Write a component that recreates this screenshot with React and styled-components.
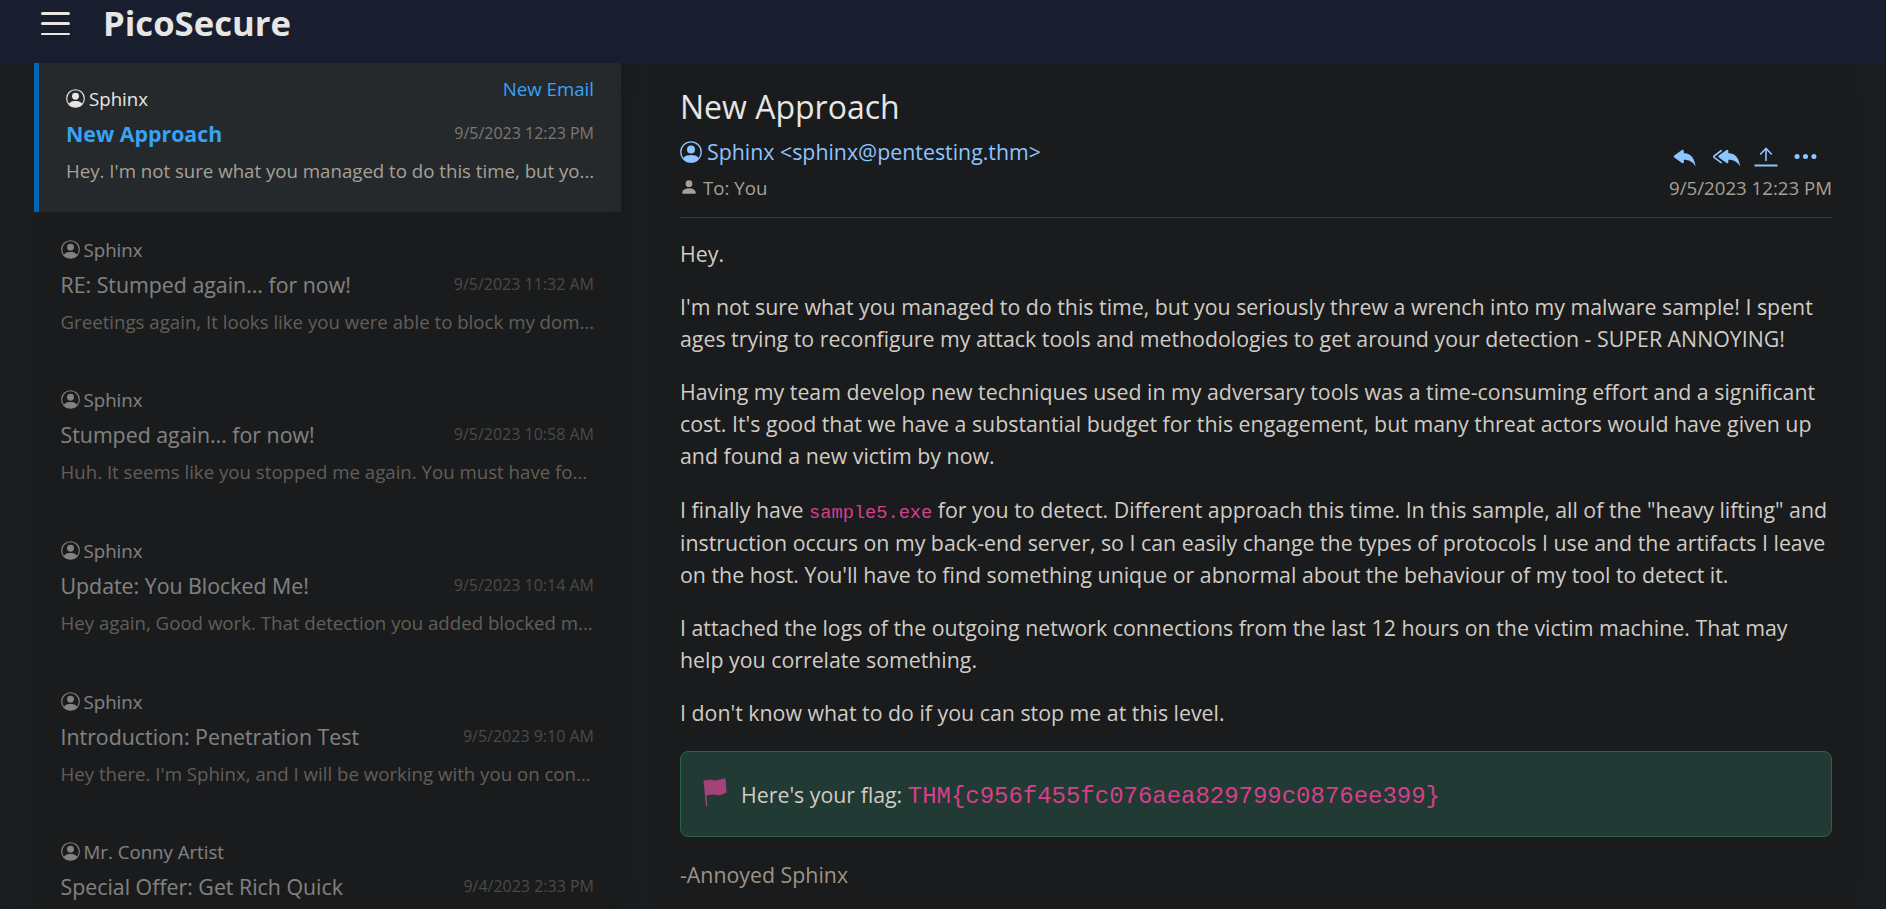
import React from 'react';
import styled, { createGlobalStyle, css } from 'styled-components';
import { BsReplyFill, BsReplyAllFill, BsThreeDots, BsPersonFill } from 'react-icons/bs';

const Global = createGlobalStyle`
  * { box-sizing: border-box; }
  html, body { margin: 0; height: 909px; overflow: hidden; }
  body {
    background: #1b1e20;
    color: #e8e6e3;
    font-family: "Open Sans", "Noto Sans", sans-serif;
    font-size: 21.33px;
  }
  p { margin: 0; }
`;

const Page = styled.div`
  display: flex;
  flex-direction: column;
  height: 909px;
  overflow: hidden;
`;

const Header = styled.header`
  display: flex;
  align-items: flex-start;
  flex: none;
  height: 63px;
  padding: 0 0 0 41px;
  background: #181e2e;
`;

const MenuButton = styled.div`
  display: flex;
  flex-direction: column;
  gap: 7.8px;
  width: 29px;
  margin: 12px 33px 0 0;
`;

const MenuLine = styled.span`
  height: 2.6px;
  border-radius: 2px;
  background: #e8e6e3;
`;

const Brand = styled.div`
  font-size: 34.67px;
  font-weight: 700;
  line-height: 45px;
`;

const Main = styled.main`
  display: flex;
  flex: none;
  gap: 32px;
  padding: 0 26px 0 34px;
  height: 846px;
  overflow: hidden;
`;

const panel = css`
  background: #1a1b1c;
  box-shadow: 0 0 30px #181f22;
`;

const MailList = styled.section`
  ${panel}
  width: 587px;
  flex: none;
`;

const MailItem = styled.article`
  display: flex;
  flex-direction: column;
  height: ${(p) => (p.$active ? '148.8px' : '150.6px')};
  padding: ${(p) => (p.$active ? '17px 27px 0 27px' : '19px 27px 0 26.5px')};
  border-left: ${(p) => (p.$active ? '5px solid #0065b5' : '0')};
  background: ${(p) => (p.$active ? '#25292c' : 'transparent')};
  opacity: ${(p) => (p.$active ? 1 : 0.5)};
`;

const ItemTop = styled.div`
  display: flex;
  justify-content: space-between;
  height: 37px;
`;

const Sender = styled.div`
  display: flex;
  align-items: center;
  gap: 4px;
  font-size: 18.67px;
`;

const NewLabel = styled.span`
  color: #37a3f5;
  font-size: 18.67px;
  line-height: 17px;
`;

const SubjectRow = styled.div`
  display: flex;
  justify-content: space-between;
  line-height: 33px;
`;

const Subject = styled.span`
  font-weight: ${(p) => (p.$active ? 700 : 400)};
  color: ${(p) => (p.$active ? '#37a3f5' : '#e8e6e3')};
`;

const ItemDate = styled.span`
  font-size: 16px;
  line-height: 32px;
  color: #7d7972;
`;

const Preview = styled.p`
  margin-top: 4px;
  font-size: 18.67px;
  line-height: 34px;
  color: #a8a095;
  white-space: nowrap;
`;

const Reader = styled.section`
  ${panel}
  flex: 1;
  min-width: 0;
  padding: 23px 28px 0 27px;
`;

const Title = styled.h1`
  margin: 0;
  font-size: 32px;
  font-weight: 400;
  line-height: 42px;
`;

const MetaRow = styled.div`
  display: flex;
  justify-content: space-between;
  height: ${(p) => p.$h}px;
`;

const From = styled.div`
  display: flex;
  align-items: center;
  gap: 5px;
  color: #8cc5ff;
`;

const To = styled.div`
  display: flex;
  align-items: center;
  gap: 5px;
  color: #a8a095;
  font-size: 18.67px;
`;

const Actions = styled.div`
  display: flex;
  align-items: center;
  gap: 14px;
  padding: 10px 13px 0 0;
  color: #8cc5ff;
`;

const Divider = styled.hr`
  margin: 18px 0 20px;
  border: 0;
  border-top: 1px solid #3a3d3f;
`;

const Paragraph = styled.p`
  margin-bottom: 21.2px;
  line-height: 32px;
  color: #d0ccc6;
  white-space: nowrap;
`;

const Code = styled.code`
  font-family: "Liberation Mono", monospace;
  font-size: ${(p) => p.$size}px;
  line-height: 28px;
  color: #d63f8c;
`;

const FlagBox = styled.div`
  display: flex;
  align-items: center;
  height: 86px;
  margin-top: 22px;
  padding: 0 22px;
  border: 1px solid #2f6149;
  border-radius: 8px;
  background: #213a33;
  color: #d0ccc6;
`;

const FlagText = styled.span`
  margin-left: 14px;
  padding-top: 3px;
  line-height: 30px;
  white-space: pre;
`;

const Signature = styled.p`
  margin-top: 22px;
  line-height: 32px;
  color: #9d9488;
`;

const UserIcon = ({ size }) => (
  <svg width={size} height={size} viewBox="0 0 22 22" fill="currentColor">
    <circle cx="11" cy="11" r="10.2" fill="none" stroke="currentColor" strokeWidth="1.3" />
    <circle cx="11" cy="8.4" r="4" />
    <path d="M3.2 17.2C5 14.6 8 14 11 14s6 .6 7.8 3.2A10.2 10.2 0 0 1 11 21.2 10.2 10.2 0 0 1 3.2 17.2z" />
  </svg>
);

const UploadIcon = () => (
  <svg width="24" height="20" viewBox="0 0 24 20" fill="none" stroke="currentColor" strokeWidth="1.6">
    <path d="M12 14V2M6.2 7.5 12 1.5l5.8 6" />
    <path d="M.5 18.5h23" strokeWidth="2" />
  </svg>
);

const FlagGlyph = styled.svg`
  flex: none;
  margin-bottom: 3px;
  fill: #a3437a;
`;

const FlagIcon = () => (
  <FlagGlyph width="24" height="29" viewBox="0 0 24 29">
    <path d="M.5 2.5 2 2l.3 1C6 0 10 3 14 2.2c3-.5 5-1.2 8.5-2l1 14.3c-3 1.5-6 3.5-9.5 2.5-4-1-7-.5-10.5.5L4.3 28.500H3z" />
  </FlagGlyph>
);

const mails = [
  { from: 'Sphinx', subject: 'New Approach', date: '9/5/2023 12:23 PM', text: "Hey. I'm not sure what you managed to do this time, but yo...", active: true },
  { from: 'Sphinx', subject: 'RE: Stumped again... for now!', date: '9/5/2023 11:32 AM', text: 'Greetings again, It looks like you were able to block my dom...' },
  { from: 'Sphinx', subject: 'Stumped again... for now!', date: '9/5/2023 10:58 AM', text: 'Huh. It seems like you stopped me again. You must have fo...' },
  { from: 'Sphinx', subject: 'Update: You Blocked Me!', date: '9/5/2023 10:14 AM', text: 'Hey again, Good work. That detection you added blocked m...' },
  { from: 'Sphinx', subject: 'Introduction: Penetration Test', date: '9/5/2023 9:10 AM', text: "Hey there. I'm Sphinx, and I will be working with you on con..." },
  { from: 'Mr. Conny Artist', subject: 'Special Offer: Get Rich Quick', date: '9/4/2023 2:33 PM', text: '' },
];

export default function App() {
  return (
    <Page>
      <Global />
      <Header>
        <MenuButton><MenuLine /><MenuLine /><MenuLine /></MenuButton>
        <Brand>PicoSecure</Brand>
      </Header>
      <Main>
        <MailList>
          {mails.map((m) => (
            <MailItem key={m.date} $active={m.active}>
              <ItemTop>
                <Sender><UserIcon size={19} />{m.from}</Sender>
                {m.active && <NewLabel>New Email</NewLabel>}
              </ItemTop>
              <SubjectRow>
                <Subject $active={m.active}>{m.subject}</Subject>
                <ItemDate>{m.date}</ItemDate>
              </SubjectRow>
              <Preview>{m.text}</Preview>
            </MailItem>
          ))}
        </MailList>
        <Reader>
          <Title>New Approach</Title>
          <MetaRow $h={47}>
            <From><UserIcon size={22} />Sphinx &lt;sphinx@pentesting.thm&gt;</From>
            <Actions>
              <BsReplyFill size={27} />
              <BsReplyAllFill size={27} />
              <UploadIcon />
              <BsThreeDots size={27} />
            </Actions>
          </MetaRow>
          <MetaRow $h={24}>
            <To><BsPersonFill size={18} />To: You</To>
            <To>9/5/2023 12:23 PM</To>
          </MetaRow>
          <Divider />
          <Paragraph>Hey.</Paragraph>
          <Paragraph>
            I'm not sure what you managed to do this time, but you seriously threw a wrench into my malware sample! I spent<br />
            ages trying to reconfigure my attack tools and methodologies to get around your detection - SUPER ANNOYING!
          </Paragraph>
          <Paragraph>
            Having my team develop new techniques used in my adversary tools was a time-consuming effort and a significant<br />
            cost. It's good that we have a substantial budget for this engagement, but many threat actors would have given up<br />
            and found a new victim by now.
          </Paragraph>
          <Paragraph>
            I finally have <Code $size={18.67}>sample5.exe</Code> for you to detect. Different approach this time. In this sample, all of the "heavy lifting" and<br />
            instruction occurs on my back-end server, so I can easily change the types of protocols I use and the artifacts I leave<br />
            on the host. You'll have to find something unique or abnormal about the behaviour of my tool to detect it.
          </Paragraph>
          <Paragraph>
            I attached the logs of the outgoing network connections from the last 12 hours on the victim machine. That may<br />
            help you correlate something.
          </Paragraph>
          <Paragraph>I don't know what to do if you can stop me at this level.</Paragraph>
          <FlagBox>
            <FlagIcon />
            <FlagText>Here's your flag: <Code $size={23.98}>{'THM{c956f455fc076aea829799c0876ee399}'}</Code></FlagText>
          </FlagBox>
          <Signature>-Annoyed Sphinx</Signature>
        </Reader>
      </Main>
    </Page>
  );
}
